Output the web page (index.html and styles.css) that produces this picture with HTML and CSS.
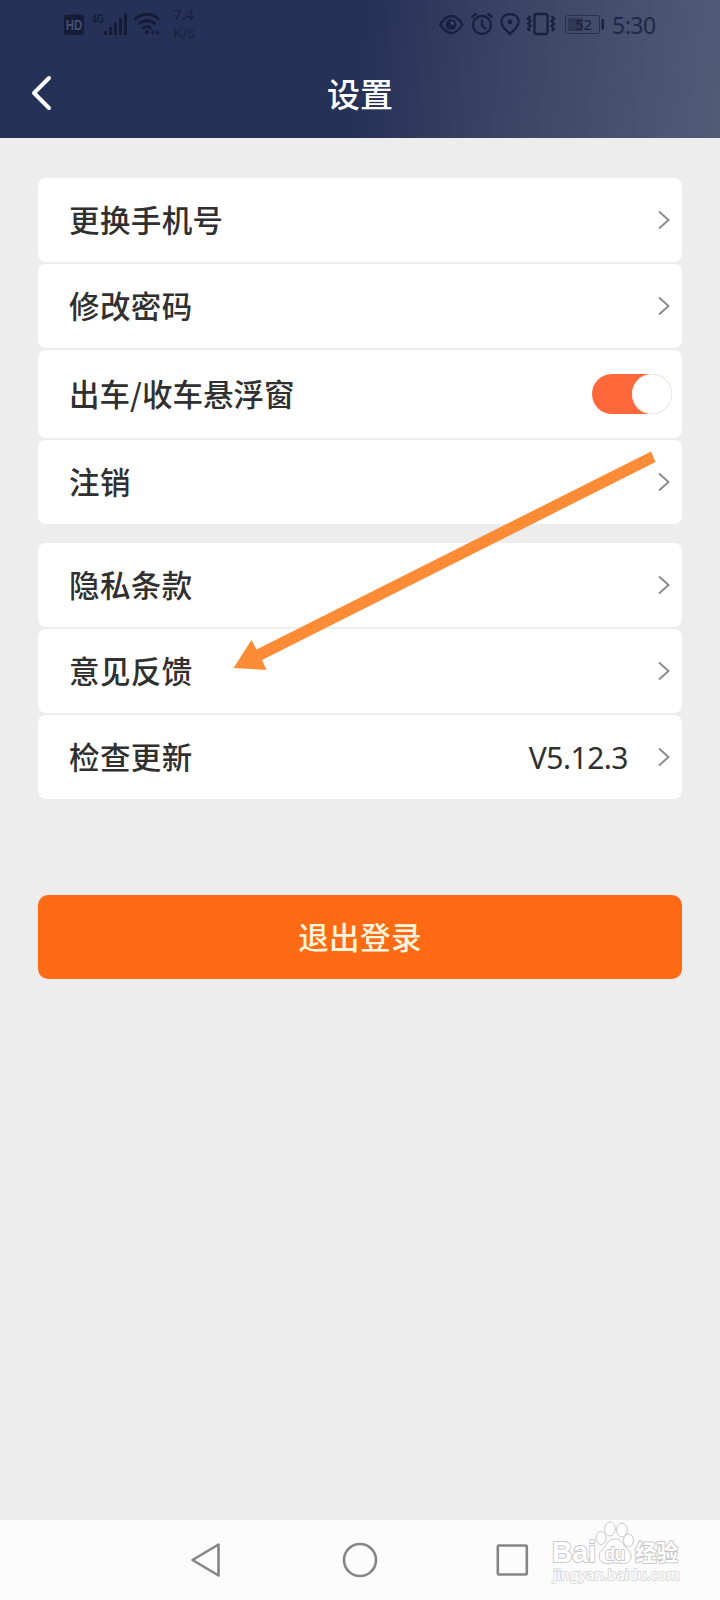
FILE: index.html
```html
<!DOCTYPE html>
<html lang="zh-CN">
<head>
<meta charset="utf-8">
<title>设置</title>
<link rel="stylesheet" href="styles.css">
</head>
<body>
<div class="screen">
  <header class="header">
    <div class="status">
      <svg class="status-icons" width="100" height="48" viewBox="64 0 100 48">
        <rect x="64" y="14.500" width="20" height="20.500" rx="3" fill="#141c38"/>
        <text class="hd" x="65.800" y="29.600" textLength="16.500" lengthAdjust="spacingAndGlyphs">HD</text>
        <text class="net" x="92" y="22.500" textLength="12" lengthAdjust="spacingAndGlyphs">4G</text>
        <g fill="#141c38">
          <rect x="104" y="31" width="3" height="4"/><rect x="109" y="27" width="3" height="8"/><rect x="114" y="22.500" width="3" height="12.500"/><rect x="119" y="18" width="3" height="17"/><rect x="124" y="13.500" width="3" height="21.500"/>
          <circle cx="147" cy="32.300" r="2.200"/>
          <path d="M151 32.500l3-3v6zM159.500 32.500l-3-3v6z"/>
        </g>
        <g fill="none" stroke="#141c38" stroke-width="2.800">
          <path d="M134.500 19.500Q147 9 159.500 19.500M138.500 24Q147 17 155.500 24M142.500 28.300Q147 25 151.500 28.300"/>
        </g>
      </svg>
      <div class="speed"><span>7.4</span><span>K/s</span></div>
      <svg class="status-right" width="166" height="48" viewBox="439 0 166 48">
        <g fill="none" stroke="#18213f" stroke-width="2.300">
          <path d="M440 24.500Q451.500 7.500 462.500 24.500Q451.500 41.500 440 24.500Z"/>
          <circle cx="482" cy="25" r="9"/>
          <path d="M482 19.500v6l4 4M471.500 17.500l5-4M492.500 17.500l-5-4"/>
          <path d="M510 34L504 28C498.500 21 502.500 14.200 510 14.200S521.500 21 516 28Z"/>
          <rect x="534.500" y="14" width="13" height="20" rx="2"/>
          <path d="M530.500 16l-2.500 2.500 2.500 2.500-2.500 2.500 2.500 2.500-2.500 2.500 2 2.500M551.500 16l2.500 2.500-2.500 2.500 2.500 2.500-2.500 2.500 2.500 2.500-2 2.500"/>
        </g>
        <circle cx="451" cy="24.500" r="5.300" fill="#18213f"/>
        <path d="M451 24.500V21.500A3 3 0 0 1 454 24.500Z" fill="#46506f"/>
        <circle cx="510" cy="22" r="2.400" fill="#18213f"/>
        <rect x="565.500" y="15.500" width="34" height="18" rx="2" fill="none" stroke="#29314c"/>
        <rect x="568" y="18" width="15" height="13" fill="#303855"/>
        <text class="battery" x="575" y="30" textLength="17" lengthAdjust="spacingAndGlyphs">52</text>
        <rect x="601.500" y="19" width="2.500" height="10.500" rx="1" fill="#18213f"/>
      </svg>
      <span class="clock">5:30</span>
    </div>
    <div class="titlebar">
      <svg class="back" width="24" height="38" viewBox="0 0 24 38"><path d="M20 4L5 19L20 34" fill="none" stroke="#fff" stroke-width="4" stroke-linecap="round" stroke-linejoin="round"/></svg>
      <h1 class="title">设置</h1>
    </div>
  </header>

  <main class="content">
    <section class="group">
      <div class="row"><span class="label">更换手机号</span><svg class="chevron" viewBox="0 0 12 20"><path d="M1 1.500L10.500 10L1 18.500"/></svg></div>
      <div class="row"><span class="label">修改密码</span><svg class="chevron" viewBox="0 0 12 20"><path d="M1 1.500L10.500 10L1 18.500"/></svg></div>
      <div class="row row-switch"><span class="label">出车/收车悬浮窗</span><div class="switch"><div class="knob"></div></div></div>
      <div class="row"><span class="label">注销</span><svg class="chevron" viewBox="0 0 12 20"><path d="M1 1.500L10.500 10L1 18.500"/></svg></div>
    </section>
    <section class="group">
      <div class="row"><span class="label">隐私条款</span><svg class="chevron" viewBox="0 0 12 20"><path d="M1 1.500L10.500 10L1 18.500"/></svg></div>
      <div class="row"><span class="label">意见反馈</span><svg class="chevron" viewBox="0 0 12 20"><path d="M1 1.500L10.500 10L1 18.500"/></svg></div>
      <div class="row"><span class="label">检查更新</span><span class="version">V5.12.3</span><svg class="chevron" viewBox="0 0 12 20"><path d="M1 1.500L10.500 10L1 18.500"/></svg></div>
    </section>
    <button class="logout">退出登录</button>
  </main>

  <nav class="navbar">
    <svg width="34" height="40" viewBox="0 0 34 40"><path d="M28.500 4.500V35.500L2.500 20Z"/></svg>
    <svg width="40" height="40" viewBox="0 0 40 40"><circle cx="20" cy="20" r="16"/></svg>
    <svg width="34" height="40" viewBox="0 0 34 40"><rect x="1.800" y="5.500" width="29" height="29" rx="1"/></svg>
  </nav>

  <svg class="arrow" width="430" height="226" viewBox="230 448 430 226"><path d="M233.500 668L251.500 640L256.500 649.500L651 451.500L655.500 462L262 660L266.500 670Z" fill="#fe8b36"/></svg>

  <svg class="watermark" width="140" height="70" viewBox="548 1518 140 70">
    <g class="mark">
      <text class="brand" x="552" y="1562" textLength="44" lengthAdjust="spacingAndGlyphs">Bai</text>
      <ellipse cx="601" cy="1538" rx="5" ry="6.500"/><ellipse cx="610" cy="1529" rx="5.300" ry="7"/><ellipse cx="622" cy="1530" rx="5.300" ry="7"/><ellipse cx="628.500" cy="1540.500" rx="5" ry="6.500"/>
      <path d="M615 1539C607 1539 607 1546 602 1550C596 1556 600 1564 608 1563.500Q615 1562 622 1563.500C631 1564 634 1556 628 1550C623 1546 623 1539 615 1539Z"/>
      <text class="du" x="605" y="1560" textLength="20" lengthAdjust="spacingAndGlyphs">du</text>
      <text class="jingyan" x="635" y="1561" textLength="43" lengthAdjust="spacingAndGlyphs">经验</text>
      <text class="url" x="553" y="1579.500" textLength="127" lengthAdjust="spacingAndGlyphs">jingyan.baidu.com</text>
    </g>
  </svg>
</div>
</body>
</html>
```
FILE: styles.css
```css
* { box-sizing: border-box; }
body {
  margin: 0;
  font-family: "Noto Sans", "Noto Sans CJK SC", sans-serif;
  color: #303030;
}
.screen {
  position: relative;
  width: 720px;
  height: 1600px;
  display: flex;
  flex-direction: column;
  background: #ededed;
  overflow: hidden;
}
.header {
  height: 138px;
  background: linear-gradient(97deg, #253156 0%, #253156 50%, #3b4464 70%, #525b76 100%);
}
.status {
  height: 48px;
  padding-left: 64px;
  display: flex;
}
.speed {
  width: 275px;
  padding: 5px 0 0 9px;
  display: flex;
  flex-direction: column;
  font: 15px/18px "Noto Sans", sans-serif;
  color: #18213f;
}
.clock {
  padding-left: 7px;
  font: 23px/50px "Noto Sans", sans-serif;
  letter-spacing: -0.5px;
  color: #20294a;
}
.hd { font: bold 14px "Liberation Sans", sans-serif; fill: #46506f; }
.net { font: bold 12px "Liberation Sans", sans-serif; fill: #141c38; }
.battery { font: 15px "Noto Sans", sans-serif; fill: #18213f; }
.titlebar {
  height: 90px;
  padding: 0 29px;
  display: grid;
  grid-template-columns: 24px 1fr 24px;
  align-items: center;
}
.title {
  margin: 0;
  padding-bottom: 1px;
  text-align: center;
  font: 500 33px/50px "Noto Sans CJK SC", sans-serif;
  color: #fff;
}
.content {
  flex: 1;
  padding: 40px 38px 0;
}
.group {
  display: flex;
  flex-direction: column;
  gap: 2px;
  margin-bottom: 19px;
}
.row {
  height: 84px;
  padding: 0 12px 0 31px;
  display: flex;
  align-items: center;
  justify-content: space-between;
  background: #fff;
  border-radius: 8px;
  font: 500 30.500px/44px "Noto Sans CJK SC", sans-serif;
}
.label {
  padding-bottom: 2px;
  letter-spacing: 0.4px;
}
.row-switch {
  height: 88px;
  padding-right: 10px;
}
.row-switch .label { letter-spacing: 0; }
.chevron {
  width: 12px;
  height: 20px;
  fill: none;
  stroke: #8d8d8d;
  stroke-width: 2;
}
.version {
  margin: 0 30px 0 auto;
  padding-top: 2px;
  font: 30px/44px "Noto Sans", sans-serif;
  letter-spacing: -0.5px;
}
.switch {
  width: 80px;
  height: 40px;
  padding-left: 40px;
  border-radius: 20px;
  background: #ff683b;
}
.knob {
  width: 40px;
  height: 40px;
  border-radius: 50%;
  background: #fff;
  box-shadow: inset 0 0 0 1px #eee;
}
.logout {
  display: block;
  width: 100%;
  height: 84px;
  margin-top: 96px;
  padding: 0 0 2px;
  border: 0;
  border-radius: 10px;
  background: #ff6a14;
  color: #fff4dc;
  font: 500 30.500px/44px "Noto Sans CJK SC", sans-serif;
  letter-spacing: 0.4px;
}
.navbar {
  height: 80px;
  padding: 0 190px;
  display: flex;
  align-items: center;
  justify-content: space-between;
  background: #fcfcfc;
  fill: none;
  stroke: #858585;
  stroke-width: 2.600;
  stroke-linejoin: round;
}
.arrow {
  position: absolute;
  left: 230px;
  top: 448px;
}
.watermark {
  position: absolute;
  left: 548px;
  top: 1518px;
}
.mark {
  fill: #fff;
  stroke: #c8c8c8;
  stroke-width: 1;
}
.mark text {
  paint-order: stroke;
  stroke-width: 2;
  stroke-linejoin: round;
}
.mark .brand { font: bold 30px "Liberation Sans", sans-serif; }
.mark .du { font: bold 19px "Liberation Sans", sans-serif; }
.mark .jingyan { font: bold 23px "Noto Sans CJK SC", sans-serif; }
.mark .url { font: 500 15px "Noto Sans", sans-serif; stroke: #d8d8d8; stroke-width: 1.800; }
```
